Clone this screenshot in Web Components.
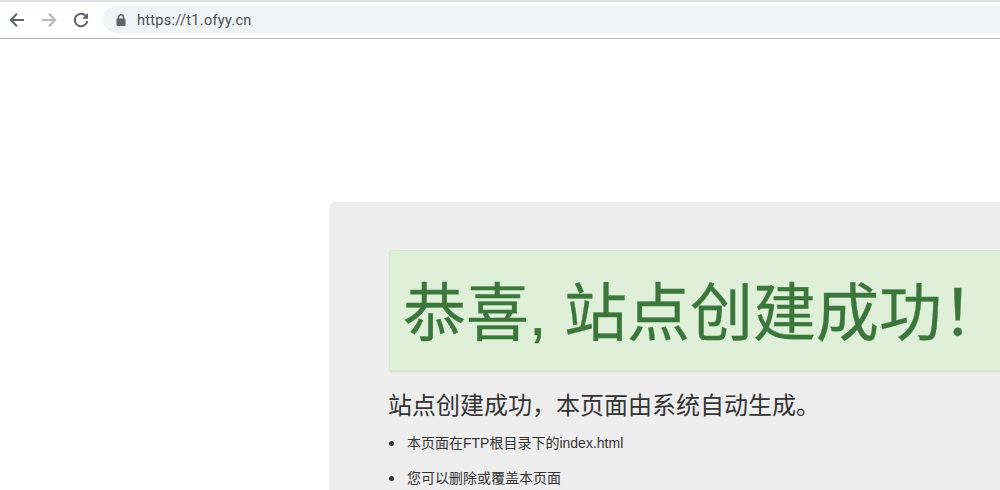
<!DOCTYPE html>
<html lang="zh-CN"><head><meta charset="utf-8">
<style>
html,body{margin:0;height:100%;overflow:hidden;background:#fff;font-family:"Liberation Sans","Noto Sans CJK SC",sans-serif}
body{display:flex;flex-direction:column}
</style></head><body>
<browser-bar url="https://t1.ofyy.cn"></browser-bar>
<site-page>
  <success-card>
    <h-alert>恭喜, 站点创建成功！</h-alert>
    <span slot="sub">站点创建成功，本页面由系统自动生成。</span>
    <info-item slot="list">本页面在FTP根目录下的index.html</info-item>
    <info-item slot="list">您可以删除或覆盖本页面</info-item>
  </success-card>
</site-page>
<script>
function def(name,html,init){customElements.define(name,class extends HTMLElement{constructor(){super();this.attachShadow({mode:'open'}).innerHTML=html;}connectedCallback(){if(init)init(this);}});}
def('browser-bar',`<style>
:host{display:flex;flex:none;align-items:center;height:36px;border-top:2px solid #dee1e6;border-bottom:1px solid #b8b8b8;background:#fff;font:14.5px "Roboto","Liberation Sans",sans-serif;padding-left:7px}
button{all:unset;display:flex;width:20px;height:20px;margin-right:12px}
svg{display:block}
.pill{flex:1;display:flex;align-items:center;height:27px;margin:-1px 0 0 12px;background:#f1f3f4;border-radius:14px 0 0 14px;padding-left:12px}
.pill svg{margin-right:10px}
.pill span{color:#4c5054;letter-spacing:.02em;position:relative;top:1px}
</style>
<button><svg width="20" height="20" viewBox="0 0 20 20" fill="none" stroke="#5f6368" stroke-width="2"><path d="M17 10H4.500M10 3.800 3.800 10l6.200 6.200"/></svg></button>
<button><svg width="20" height="20" viewBox="0 0 20 20" fill="none" stroke="#b4b6b9" stroke-width="2"><path d="M3 10h12.500M10 3.800 16.200 10 10 16.200"/></svg></button>
<button style="margin-right:0"><svg width="20" height="20" viewBox="0 0 20 20" fill="none"><path d="M14.700 5.700A6.300 6.300 0 1 0 16.300 11" stroke="#5f6368" stroke-width="2"/><path d="M17 3v5.800h-5.800z" fill="#5f6368"/></svg></button>
<div class="pill"><svg width="12" height="14" viewBox="0 0 12 14"><path d="M3.500 6V4.200a2.500 2.500 0 0 1 5 0V6" fill="none" stroke="#5f6368" stroke-width="1.500"/><rect x="1.500" y="5.500" width="9" height="7.500" rx="1" fill="#5f6368"/></svg><span id="u"></span></div>`,
el=>{el.shadowRoot.getElementById('u').textContent=el.getAttribute('url');});
def('site-page',`<style>:host{display:block;flex:1;min-height:0;overflow:hidden;padding:163px 0 0 329px}</style><slot></slot>`);
def('success-card',`<style>
:host{display:block;width:1100px;box-sizing:border-box;background:#eee;border-radius:6px;padding:48px 60px;color:#333}
.sub{font-size:24px;line-height:34px;margin:17px 0 0 -1px;color:#333}
ul{margin:10px 0 0;padding:0;list-style:none}
</style><slot></slot><div class="sub"><slot name="sub"></slot></div><ul><slot name="list"></slot></ul>`);
def('h-alert',`<style>
:host{display:block;box-sizing:border-box;height:122px;padding:2px 13px 0;background:#dff0d8;border:1px solid #d6e9c6;border-bottom:2px solid #d8e9cb;border-radius:4px;box-shadow:0 1px 2px rgba(0,0,0,.05);color:#3c763d;font-size:63px;line-height:121px;white-space:nowrap;-webkit-text-stroke:.3px #3c763d}
</style><slot></slot>`);
def('info-item',`<style>
:host{display:flex;align-items:center;height:20px;margin-bottom:15px;font-size:14px;line-height:20px;color:#333}
i{width:5px;height:5px;border-radius:50%;background:#333;margin:0 13px 0 0;flex:none}
</style><i></i><slot></slot>`);
</script>
</body></html>
